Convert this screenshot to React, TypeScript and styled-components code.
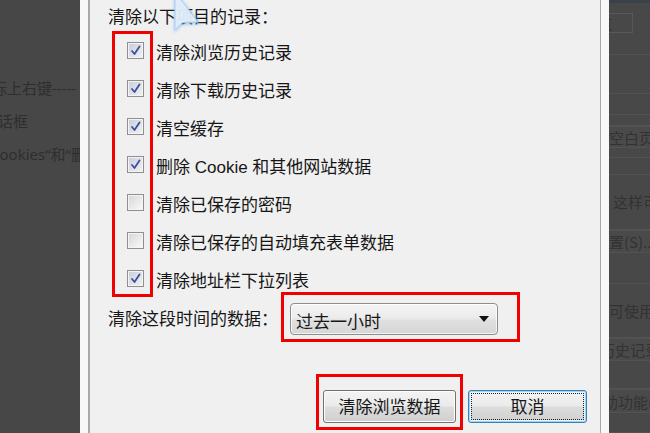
import styled, { createGlobalStyle } from 'styled-components'

const Global = createGlobalStyle`
  html, body {
    margin: 0;
    padding: 0;
    background: #474747;
  }
  body {
    font-family: "Noto Sans CJK SC", "Noto Sans", sans-serif;
  }
`

const Screen = styled.div`
  display: flex;
  width: 650px;
  height: 433px;
  overflow: hidden;
  background: #474747;
`

/* ---------- page behind the dialog ---------- */

const LeftBackdrop = styled.div`
  width: 80px;
  flex-shrink: 0;
  overflow: hidden;
  padding-top: 77px;
  box-sizing: border-box;
  display: flex;
  flex-direction: column;
  gap: 11px;
`

const BackLine = styled.div<{ $indent: number }>`
  margin-left: ${({ $indent }) => $indent}px;
  white-space: nowrap;
  font-family: "Noto Sans", "Noto Sans CJK SC", sans-serif;
  font-size: 15px;
  line-height: 22px;
  color: #2e2e2e;
`

const RightBackdrop = styled.div`
  flex: 1;
  overflow: hidden;
  display: flex;
  flex-direction: column;
  background: #484848;
`

const TopStrip = styled.div`
  height: 3px;
  background: #3a4149;
  margin-bottom: 10px;
`

const Band = styled.div<{ $h: number; $boxed?: boolean }>`
  height: ${({ $h }) => $h}px;
  box-sizing: border-box;
  border-bottom: 1px solid #525252;
  ${({ $boxed }) => ($boxed ? 'border-top: 1px solid #525252; background: #4a4a4a;' : '')}
  display: flex;
  align-items: center;
  overflow: hidden;
  white-space: nowrap;
  font-size: 15px;
  color: #323232;
`

const BandText = styled.span<{ $indent?: number }>`
  margin-left: ${({ $indent }) => $indent ?? 0}px;
`

const TabBox = styled.div`
  width: 24px;
  height: 20px;
  box-sizing: border-box;
  border: 1px solid #585858;
  border-left: none;
  overflow: hidden;
  font-size: 14px;
  line-height: 18px;
  color: #2f2f2f;
  text-indent: -11px;
  white-space: nowrap;
`

/* ---------- dialog ---------- */

const Frame = styled.div`
  width: 529px;
  flex-shrink: 0;
  box-sizing: border-box;
  padding: 0 8px;
  background: #f8f8f8;
  display: flex;
`

const Dialog = styled.div`
  position: relative;
  flex: 1;
  box-sizing: border-box;
  border-left: 2px solid #a9a9a9;
  border-right: 1px solid #a9a9a9;
  background: #f0f0f0;
  padding: 8px 12px 0 18px;
  color: #161616;
  font-family: "Liberation Sans", "Noto Sans CJK SC", sans-serif;
  font-size: 17px;
`

const Title = styled.div`
  line-height: 20px;
  height: 20px;
  white-space: nowrap;
`

const CheckList = styled.div`
  position: relative;
  margin-top: 5px;
  display: flex;
  flex-direction: column;
`

const Row = styled.label`
  display: flex;
  align-items: center;
  gap: 12px;
  height: 38px;
  padding-left: 19px;
  white-space: nowrap;
  line-height: 20px;
`

const RowText = styled.span`
  padding-top: 4px;
`

const Box = styled.span<{ $checked: boolean }>`
  width: 17px;
  height: 17px;
  margin-bottom: 3px;
  box-sizing: border-box;
  flex-shrink: 0;
  border: 1px solid #8f8f8f;
  box-shadow: inset 0 0 0 1px #f4f4f4;
  background: ${({ $checked }) =>
    $checked
      ? 'linear-gradient(135deg, #c9ccd6 0%, #e2e4ea 60%, #f1f2f5 100%)'
      : 'linear-gradient(135deg, #d6d6d6 0%, #ececec 60%, #fbfbfb 100%)'};
  display: flex;
  align-items: center;
  justify-content: center;
`

const Highlight = styled.div<{ $t: number; $r: number; $b: number; $l: number }>`
  position: absolute;
  top: ${({ $t }) => $t}px;
  right: ${({ $r }) => $r}px;
  bottom: ${({ $b }) => $b}px;
  left: ${({ $l }) => $l}px;
  border: 3px solid #f00000;
  pointer-events: none;
`

const CheckHighlight = styled.div`
  position: absolute;
  left: 4px;
  top: -2px;
  width: 41px;
  bottom: 2px;
  box-sizing: border-box;
  border: 3px solid #f00000;
  pointer-events: none;
`

const TimeRow = styled.div`
  display: flex;
  align-items: center;
  gap: 12px;
  margin-top: 4px;
  white-space: nowrap;
`

const TimeLabel = styled.span`
  line-height: 20px;
  width: 170px;
  padding-top: 2px;
`

const SelectWrap = styled.div`
  position: relative;
`

const Select = styled.div`
  width: 208px;
  height: 32px;
  box-sizing: border-box;
  border: 1px solid #8d8d8d;
  border-radius: 4px;
  background: linear-gradient(#f4f4f4 0%, #ececec 45%, #e0e0e0 55%, #d6d6d6 100%);
  box-shadow: inset 0 0 0 1px rgba(255, 255, 255, 0.7);
  display: flex;
  align-items: center;
  justify-content: space-between;
  padding: 2px 8px 0 5px;
`

const Caret = styled.span`
  width: 0;
  height: 0;
  margin-bottom: 2px;
  border-left: 5px solid transparent;
  border-right: 5px solid transparent;
  border-top: 6px solid #111;
`

const ButtonRow = styled.div`
  display: flex;
  justify-content: flex-end;
  gap: 12px;
  margin-top: 55px;
  padding-right: 1px;
`

const ButtonWrap = styled.div`
  position: relative;
`

const Button = styled.button<{ $w: number; $focus?: boolean }>`
  width: ${({ $w }) => $w}px;
  height: 33px;
  box-sizing: border-box;
  border-radius: 3px;
  border: 1px solid ${({ $focus }) => ($focus ? '#3c7fb1' : '#707070')};
  background: linear-gradient(#f3f3f3 0%, #ebebeb 48%, #dddddd 52%, #cfcfcf 100%);
  box-shadow: ${({ $focus }) =>
    $focus ? 'inset 0 0 0 1px #9fd5f3, inset 0 0 0 2px #eaf6fd' : 'inset 0 0 0 1px #fcfcfc'};
  outline: ${({ $focus }) => ($focus ? '1px dotted #222' : 'none')};
  outline-offset: -4px;
  font-family: inherit;
  font-size: 17px;
  color: #161616;
  padding: 2px 0 0;
  line-height: 20px;
`

const Pointer = styled.svg`
  position: absolute;
  left: 80px;
  top: 0;
  pointer-events: none;
`

const items: [string, boolean][] = [
  ['清除浏览历史记录', true],
  ['清除下载历史记录', true],
  ['清空缓存', true],
  ['删除 Cookie 和其他网站数据', true],
  ['清除已保存的密码', false],
  ['清除已保存的自动填充表单数据', false],
  ['清除地址栏下拉列表', true],
]

function Check() {
  return (
    <svg width="11" height="11" viewBox="0 0 11 11">
      <path d="M2 6 L4.5 9 L9.5 1.5" fill="none" stroke="#3b4f9e" strokeWidth="1.8" strokeLinecap="round" strokeLinejoin="round" />
    </svg>
  )
}

export default function App() {
  return (
    <>
      <Global />
      <Screen>
        <LeftBackdrop>
          <BackLine $indent={-8}>标上右键-----</BackLine>
          <BackLine $indent={-17}>对话框</BackLine>
          <BackLine $indent={-10}>Cookies“和“删除</BackLine>
        </LeftBackdrop>

        <Frame>
          <Dialog>
            <Title>清除以下项目的记录：</Title>
            <CheckList>
              {items.map(([text, checked]) => (
                <Row key={text}>
                  <Box $checked={checked}>{checked && <Check />}</Box>
                  <RowText>{text}</RowText>
                </Row>
              ))}
              <CheckHighlight />
            </CheckList>

            <TimeRow>
              <TimeLabel>清除这段时间的数据：</TimeLabel>
              <SelectWrap>
                <Select>
                  <span>过去一小时</span>
                  <Caret />
                </Select>
                <Highlight $t={-11} $r={-22} $b={-7} $l={-9} />
              </SelectWrap>
            </TimeRow>

            <ButtonRow>
              <ButtonWrap>
                <Button $w={133}>清除浏览数据</Button>
                <Highlight $t={-16} $r={-7} $b={-7} $l={-7} />
              </ButtonWrap>
              <Button $w={119} $focus>
                取消
              </Button>
            </ButtonRow>

            <Pointer width="36" height="38" viewBox="0 0 36 38">
              <defs>
                <filter id="glow" x="-40%" y="-40%" width="180%" height="180%">
                  <feGaussianBlur stdDeviation="1.6" />
                </filter>
              </defs>
              <path d="M4 -10 L4 33 L12 25 L31 24 Z" fill="#7fb6ea" opacity="0.6" filter="url(#glow)" />
              <path d="M5 -8 L5 30 L12 22.5 L28 22 Z" fill="#e6f0fb" stroke="#a9cff2" strokeWidth="1" opacity="0.9" />
            </Pointer>
          </Dialog>
        </Frame>

        <RightBackdrop>
          <TopStrip />
          <TabBox>览</TabBox>
          <Band $h={23} />
          <Band $h={40} />
          <Band $h={21} />
          <Band $h={11} />
          <Band $h={23} $boxed>
            <BandText>空白页</BandText>
          </Band>
          <Band $h={10} />
          <Band $h={17} />
          <Band $h={56}>
            <BandText $indent={4}>这样可</BandText>
          </Band>
          <Band $h={24} $boxed>
            <BandText>置(S)...</BandText>
          </Band>
          <Band $h={31} />
          <Band $h={55}>
            <BandText>可使用户</BandText>
          </Band>
          <Band $h={24} $boxed>
            <BandText $indent={-9}>历史记录</BandText>
          </Band>
          <Band $h={28} />
          <Band $h={25} $boxed>
            <BandText $indent={-6}>助功能(</BandText>
          </Band>
          <Band $h={20} />
        </RightBackdrop>
      </Screen>
    </>
  )
}
